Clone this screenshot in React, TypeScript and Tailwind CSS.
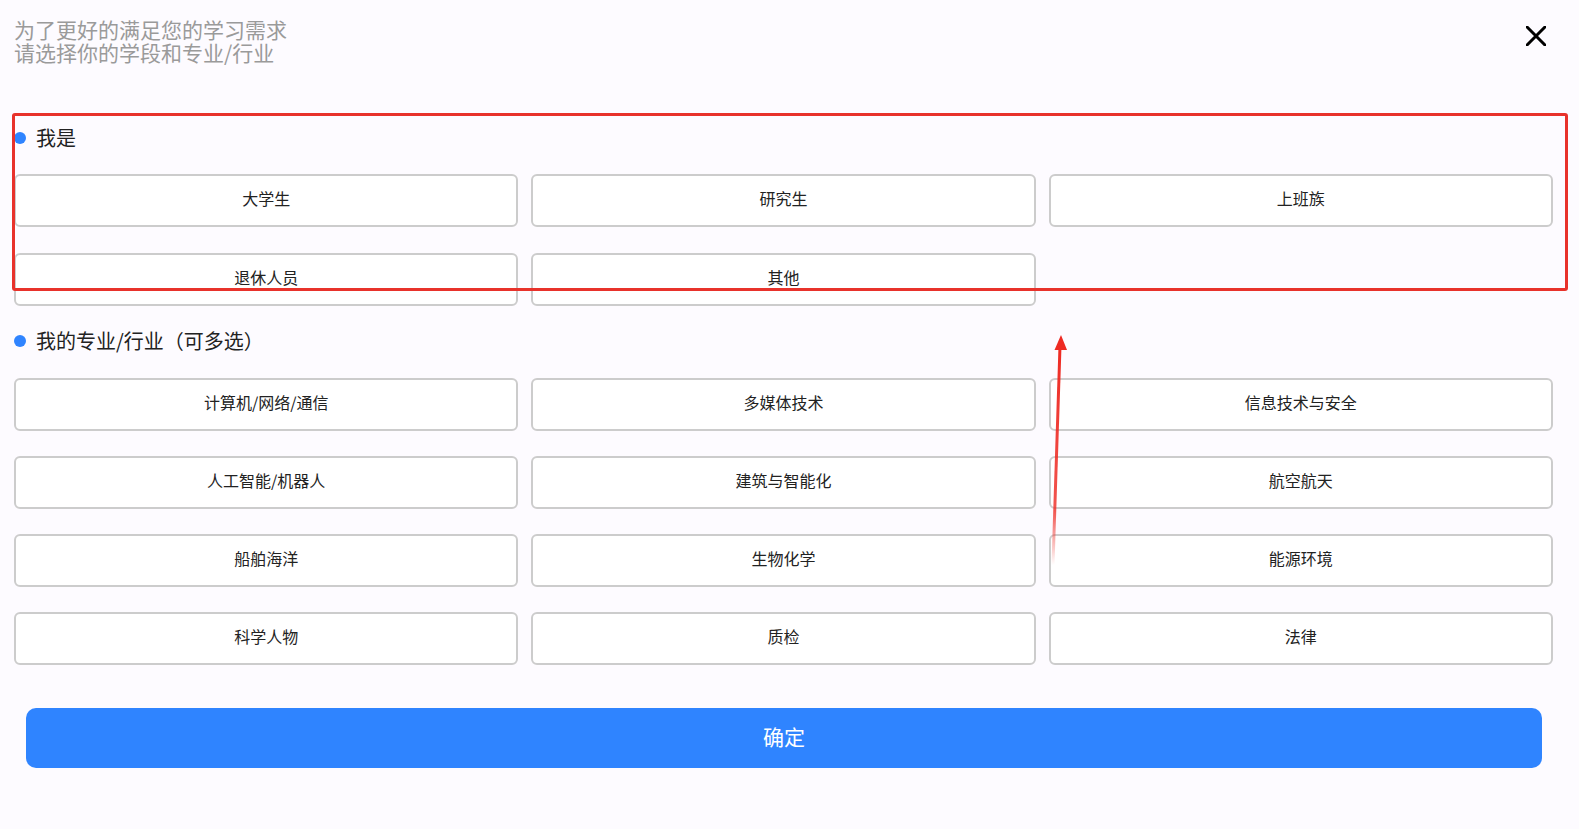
const roles = ["大学生", "研究生", "上班族", "退休人员", "其他"];

const majors = [
  "计算机/网络/通信",
  "多媒体技术",
  "信息技术与安全",
  "人工智能/机器人",
  "建筑与智能化",
  "航空航天",
  "船舶海洋",
  "生物化学",
  "能源环境",
  "科学人物",
  "质检",
  "法律",
];

function SectionTitle({ children, className }: any) {
  return (
    <div className={"flex h-[28px] items-center gap-[10px] " + className}>
      <span className="h-[12px] w-[12px] rounded-full bg-[#2f84ff]" />
      <span className="text-[20px] leading-[28px] text-[#222222]">{children}</span>
    </div>
  );
}

function Option({ label }: any) {
  return (
    <button className="flex h-[53px] items-center justify-center rounded-[6px] border-2 border-[#cccccc] bg-white pb-[5px] text-[16px] text-[#222222]">
      {label}
    </button>
  );
}

export default function App() {
  return (
    <div
      className="relative min-h-screen w-full bg-[#fdfbff] pl-[14px] pr-[26px]"
      style={{ fontFamily: '"Noto Sans CJK SC", "Noto Sans", sans-serif' }}
    >
      {/* Header */}
      <div className="flex items-start justify-between">
        <div className="pt-[18px] text-[21px] leading-[23px] text-[#9a9a9a]">
          <p>为了更好的满足您的学习需求</p>
          <p>请选择你的学段和专业/行业</p>
        </div>
        <button className="mt-[26px] mr-[7px] h-[20px] w-[20px]">
          <svg viewBox="0 0 20 20" width="20" height="20">
            <path d="M1 1 L19 19 M19 1 L1 19" stroke="#000" strokeWidth="3" strokeLinecap="square" />
          </svg>
        </button>
      </div>

      {/* 我是 */}
      <SectionTitle className="mt-[60px]">我是</SectionTitle>
      <div className="mt-[22px] grid grid-cols-3 gap-x-[13px] gap-y-[26px]">
        {roles.map((r) => (
          <Option key={r} label={r} />
        ))}
      </div>

      {/* 专业 */}
      <SectionTitle className="mt-[21px]">我的专业/行业（可多选）</SectionTitle>
      <div className="mt-[23px] grid grid-cols-3 gap-x-[13px] gap-y-[25px]">
        {majors.map((m) => (
          <Option key={m} label={m} />
        ))}
      </div>

      <button className="mt-[43px] ml-[12px] mr-[11px] flex h-[60px] w-[calc(100%-23px)] items-center justify-center rounded-[10px] bg-[#2f84ff] pb-[2px] text-[21px] text-white">
        确定
      </button>

      {/* annotation overlay */}
      <div className="pointer-events-none absolute left-[12px] top-[113px] h-[178px] w-[1556px] rounded-[3px] border-[3px] border-[#e8322b]" />
      <svg
        className="pointer-events-none absolute left-0 top-0"
        width="1579"
        height="829"
        viewBox="0 0 1579 829"
      >
        <defs>
          <linearGradient id="fade" x1="0" y1="1" x2="0" y2="0">
            <stop offset="0" stopColor="#ee2a22" stopOpacity="0" />
            <stop offset="0.25" stopColor="#ee2a22" stopOpacity="0.8" />
            <stop offset="1" stopColor="#ee2a22" stopOpacity="1" />
          </linearGradient>
        </defs>
        <path d="M1053 565 L1060 346" stroke="url(#fade)" strokeWidth="3" fill="none" />
        <polygon points="1061,335 1054.5,350 1067,350" fill="#ee2a22" />
      </svg>
    </div>
  );
}
